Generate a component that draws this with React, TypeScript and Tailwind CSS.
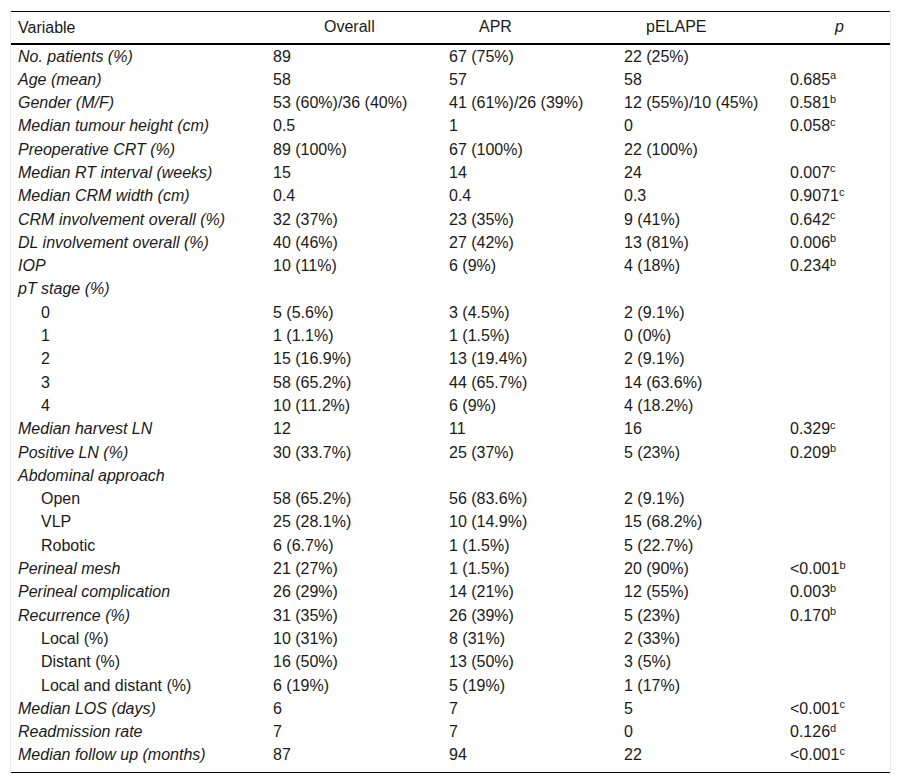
type Row = {
  label: string;
  sub?: boolean;
  overall?: string;
  apr?: string;
  pelape?: string;
  p?: string;
  sup?: string;
};

const rows: Row[] = [
  { label: 'No. patients (%)', overall: '89', apr: '67 (75%)', pelape: '22 (25%)' },
  { label: 'Age (mean)', overall: '58', apr: '57', pelape: '58', p: '0.685', sup: 'a' },
  { label: 'Gender (M/F)', overall: '53 (60%)/36 (40%)', apr: '41 (61%)/26 (39%)', pelape: '12 (55%)/10 (45%)', p: '0.581', sup: 'b' },
  { label: 'Median tumour height (cm)', overall: '0.5', apr: '1', pelape: '0', p: '0.058', sup: 'c' },
  { label: 'Preoperative CRT (%)', overall: '89 (100%)', apr: '67 (100%)', pelape: '22 (100%)' },
  { label: 'Median RT interval (weeks)', overall: '15', apr: '14', pelape: '24', p: '0.007', sup: 'c' },
  { label: 'Median CRM width (cm)', overall: '0.4', apr: '0.4', pelape: '0.3', p: '0.9071', sup: 'c' },
  { label: 'CRM involvement overall (%)', overall: '32 (37%)', apr: '23 (35%)', pelape: '9 (41%)', p: '0.642', sup: 'c' },
  { label: 'DL involvement overall (%)', overall: '40 (46%)', apr: '27 (42%)', pelape: '13 (81%)', p: '0.006', sup: 'b' },
  { label: 'IOP', overall: '10 (11%)', apr: '6 (9%)', pelape: '4 (18%)', p: '0.234', sup: 'b' },
  { label: 'pT stage (%)' },
  { label: '0', sub: true, overall: '5 (5.6%)', apr: '3 (4.5%)', pelape: '2 (9.1%)' },
  { label: '1', sub: true, overall: '1 (1.1%)', apr: '1 (1.5%)', pelape: '0 (0%)' },
  { label: '2', sub: true, overall: '15 (16.9%)', apr: '13 (19.4%)', pelape: '2 (9.1%)' },
  { label: '3', sub: true, overall: '58 (65.2%)', apr: '44 (65.7%)', pelape: '14 (63.6%)' },
  { label: '4', sub: true, overall: '10 (11.2%)', apr: '6 (9%)', pelape: '4 (18.2%)' },
  { label: 'Median harvest LN', overall: '12', apr: '11', pelape: '16', p: '0.329', sup: 'c' },
  { label: 'Positive LN (%)', overall: '30 (33.7%)', apr: '25 (37%)', pelape: '5 (23%)', p: '0.209', sup: 'b' },
  { label: 'Abdominal approach' },
  { label: 'Open', sub: true, overall: '58 (65.2%)', apr: '56 (83.6%)', pelape: '2 (9.1%)' },
  { label: 'VLP', sub: true, overall: '25 (28.1%)', apr: '10 (14.9%)', pelape: '15 (68.2%)' },
  { label: 'Robotic', sub: true, overall: '6 (6.7%)', apr: '1 (1.5%)', pelape: '5 (22.7%)' },
  { label: 'Perineal mesh', overall: '21 (27%)', apr: '1 (1.5%)', pelape: '20 (90%)', p: '<0.001', sup: 'b' },
  { label: 'Perineal complication', overall: '26 (29%)', apr: '14 (21%)', pelape: '12 (55%)', p: '0.003', sup: 'b' },
  { label: 'Recurrence (%)', overall: '31 (35%)', apr: '26 (39%)', pelape: '5 (23%)', p: '0.170', sup: 'b' },
  { label: 'Local (%)', sub: true, overall: '10 (31%)', apr: '8 (31%)', pelape: '2 (33%)' },
  { label: 'Distant (%)', sub: true, overall: '16 (50%)', apr: '13 (50%)', pelape: '3 (5%)' },
  { label: 'Local and distant (%)', sub: true, overall: '6 (19%)', apr: '5 (19%)', pelape: '1 (17%)' },
  { label: 'Median LOS (days)', overall: '6', apr: '7', pelape: '5', p: '<0.001', sup: 'c' },
  { label: 'Readmission rate', overall: '7', apr: '7', pelape: '0', p: '0.126', sup: 'd' },
  { label: 'Median follow up (months)', overall: '87', apr: '94', pelape: '22', p: '<0.001', sup: 'c' },
];

export default function App() {
  return (
    <div className="bg-white px-[10px] pt-[11px] pb-[11px] text-[16px] text-[#1a1a1a] font-['Liberation_Sans',Arial,sans-serif]">
      <div className="border-x border-[#e8e8e8]">
        <table className="w-full table-fixed border-collapse">
          <colgroup>
            <col className="w-[255px]" />
            <col className="w-[176px]" />
            <col className="w-[175px]" />
            <col className="w-[166px]" />
            <col />
          </colgroup>
          <thead>
            <tr className="border-t border-black border-b-2 border-b-black">
              <th className="h-[32px] pl-[7px] text-left font-normal leading-[19px]">Variable</th>
              <th className="pl-[58px] text-left font-normal">Overall</th>
              <th className="pl-[37px] text-left font-normal">APR</th>
              <th className="pl-[29px] text-left font-normal">pELAPE</th>
              <th className="pl-[52px] text-left font-normal italic">p</th>
            </tr>
          </thead>
          <tbody className="border-b border-black">
            {rows.map((r, i) => {
              const pad = i === rows.length - 1 ? 'pt-[2px] pb-[7px]' : 'py-[2px]';
              return (
                <tr key={i} className="leading-[19.3px]">
                  <td className={r.sub ? `${pad} pl-[30px]` : `${pad} pl-[7px] italic`}>{r.label}</td>
                  <td className={`${pad} pl-[7px]`}>{r.overall}</td>
                  <td className={`${pad} pl-[7px]`}>{r.apr}</td>
                  <td className={`${pad} pl-[7px]`}>{r.pelape}</td>
                  <td className={`${pad} pl-[7px]`}>
                    {r.p}
                    {r.sup && <sup className="text-[11px]">{r.sup}</sup>}
                  </td>
                </tr>
              );
            })}
          </tbody>
        </table>
      </div>
    </div>
  );
}
